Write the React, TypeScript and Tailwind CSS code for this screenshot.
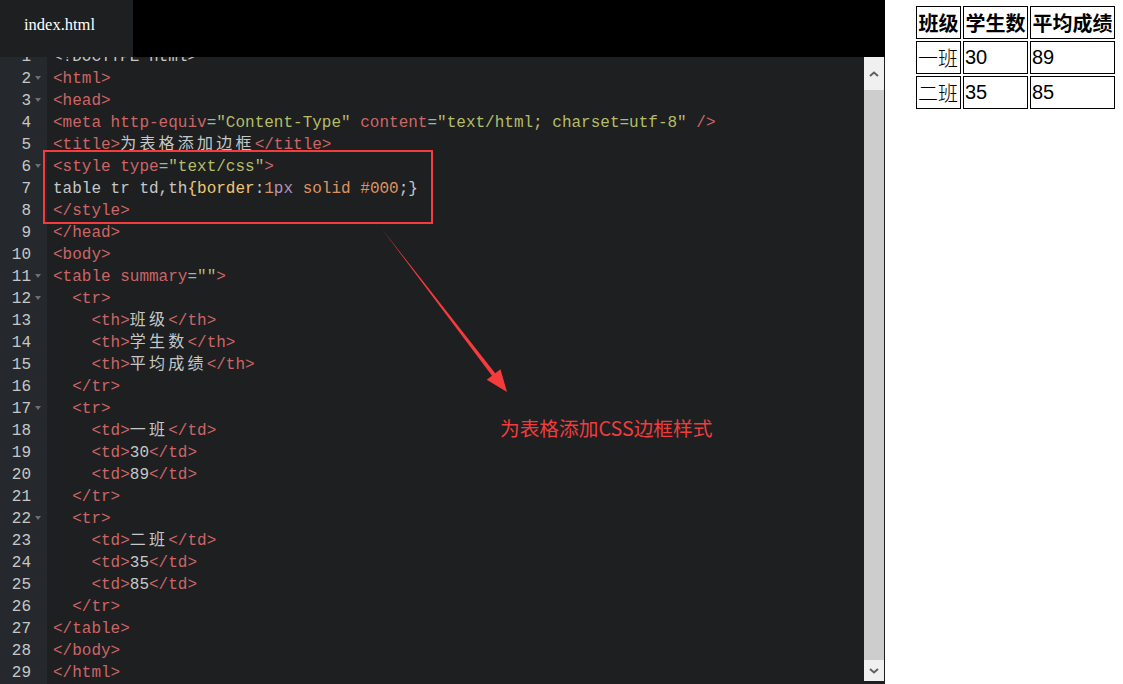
import React from "react";

const R = "#cc6666";
const W = "#c5c8c6";
const G = "#b5bd68";
const A = "#8abeb7";
const Y = "#f0c674";
const O = "#de935f";
const P = "#b294bb";

type Tok = [string, string, boolean?];

const lines: Tok[][] = [
  [["<!DOCTYPE html>", W]],
  [["<html>", R]],
  [["<head>", R]],
  [
    ["<meta http-equiv", R],
    ["=", A],
    ['"Content-Type"', G],
    [" content", R],
    ["=", A],
    ['"text/html; charset=utf-8"', G],
    [" />", R],
  ],
  [["<title>", R], ["为表格添加边框", W, true], ["</title>", R]],
  [["<style type", R], ["=", A], ['"text/css"', G], [">", R]],
  [
    ["table tr td,th", W],
    ["{", Y],
    ["border", Y],
    [":", W],
    ["1", O],
    ["px", P],
    [" solid #000", O],
    [";", W],
    ["}", W],
  ],
  [["</style>", R]],
  [["</head>", R]],
  [["<body>", R]],
  [["<table summary", R], ["=", A], ['""', G], [">", R]],
  [["  ", W], ["<tr>", R]],
  [["    ", W], ["<th>", R], ["班级", W, true], ["</th>", R]],
  [["    ", W], ["<th>", R], ["学生数", W, true], ["</th>", R]],
  [["    ", W], ["<th>", R], ["平均成绩", W, true], ["</th>", R]],
  [["  ", W], ["</tr>", R]],
  [["  ", W], ["<tr>", R]],
  [["    ", W], ["<td>", R], ["一班", W, true], ["</td>", R]],
  [["    ", W], ["<td>", R], ["30", W], ["</td>", R]],
  [["    ", W], ["<td>", R], ["89", W], ["</td>", R]],
  [["  ", W], ["</tr>", R]],
  [["  ", W], ["<tr>", R]],
  [["    ", W], ["<td>", R], ["二班", W, true], ["</td>", R]],
  [["    ", W], ["<td>", R], ["35", W], ["</td>", R]],
  [["    ", W], ["<td>", R], ["85", W], ["</td>", R]],
  [["  ", W], ["</tr>", R]],
  [["</table>", R]],
  [["</body>", R]],
  [["</html>", R]],
];

const folds = new Set([2, 3, 6, 11, 12, 17, 22]);

const mono = { fontFamily: '"Liberation Mono", "Noto Sans CJK SC", monospace' };

export default function App() {
  return (
    <div className="relative flex w-[1123px] h-[684px] overflow-hidden bg-white">
      {/* Editor */}
      <div className="w-[885px] h-full flex flex-col bg-[#1d1f21]">
        <div className="h-[57px] flex bg-black shrink-0 relative z-10">
          <div
            className="w-[133px] h-full bg-[#1d1f21] flex items-center pl-[24px] pb-[6px] text-white text-[16.5px]"
            style={{ fontFamily: '"Liberation Serif", serif' }}
          >
            index.html
          </div>
        </div>
        <div className="flex-1 flex overflow-hidden">
          {/* gutter */}
          <div className="w-[47px] bg-[#25282c] overflow-hidden">
            <div className="mt-[-11px] text-[16px] text-[#c5c8c6]" style={mono}>
              {lines.map((_, i) => (
                <div key={i} className="h-[22px] leading-[22px] flex items-center">
                  <span className="w-[31px] text-right">{i + 1}</span>
                  {folds.has(i + 1) && (
                    <span className="ml-[4px] mb-[2px] w-0 h-0 border-l-[3.5px] border-r-[3.5px] border-t-[4px] border-l-transparent border-r-transparent border-t-[#6d6f72]" />
                  )}
                </div>
              ))}
            </div>
          </div>
          {/* code */}
          <div className="flex-1 overflow-hidden pl-[6px]">
            <div className="mt-[-11px] text-[16px] whitespace-pre" style={mono}>
              {lines.map((toks, i) => (
                <div key={i} className="h-[22px] leading-[22px]">
                  {toks.map(([t, c, cjk], j) => (
                    <span
                      key={j}
                      className={cjk ? "tracking-[3.2px]" : ""}
                      style={{ color: c }}
                    >
                      {t}
                    </span>
                  ))}
                </div>
              ))}
            </div>
          </div>
          {/* scrollbar */}
          <div className="w-[20px] flex flex-col">
            <div className="h-[33px] bg-[#f0f0f0] flex items-center justify-center">
              <svg width="10" height="6" viewBox="0 0 10 6">
                <path d="M1 5 L5 1.5 L9 5" fill="none" stroke="#606060" strokeWidth="2" />
              </svg>
            </div>
            <div className="flex-1 bg-[#cdcdcd]" />
            <div className="h-[21px] bg-[#f0f0f0] flex items-center justify-center">
              <svg width="10" height="6" viewBox="0 0 10 6">
                <path d="M1 1 L5 4.5 L9 1" fill="none" stroke="#606060" strokeWidth="2" />
              </svg>
            </div>
            <div className="h-[3px] bg-[#1d1f21]" />
          </div>
          <div className="w-[1px] bg-[#1d1f21]" />
        </div>
      </div>

      {/* Preview */}
      <div className="flex-1 bg-white pt-[4px] pl-[29px]">
        <table className="border-separate border-spacing-[2px] text-black">
          <thead>
            <tr>
              {[
                ["班级", "w-[41px]"],
                ["学生数", "w-[61px]"],
                ["平均成绩", "w-[81px]"],
              ].map(([t, w]) => (
                <th
                  key={t}
                  className="border border-black p-[1px] font-bold text-[20px] leading-[29px]"
                  style={{ fontFamily: '"Noto Sans CJK SC", sans-serif' }}
                >
                  <div className={w + " h-[29px] text-center"}>{t}</div>
                </th>
              ))}
            </tr>
          </thead>
          <tbody>
            {[
              ["一班", "30", "89"],
              ["二班", "35", "85"],
            ].map((row) => (
              <tr key={row[0]}>
                {row.map((c, k) => (
                  <td
                    key={k}
                    className="border border-black p-[1px] text-[20px] leading-[29px]"
                    style={{
                      fontFamily:
                        k === 0
                          ? '"Noto Sans CJK SC", serif'
                          : '"Liberation Sans", "Noto Sans CJK SC", sans-serif',
                    }}
                  >
                    <div
                      className={
                        (k === 0 ? "w-[41px] font-light" : k === 1 ? "w-[61px]" : "w-[81px]") +
                        " h-[29px] text-left"
                      }
                    >
                      {c}
                    </div>
                  </td>
                ))}
              </tr>
            ))}
          </tbody>
        </table>
      </div>

      {/* Annotations */}
      <div className="absolute left-[43px] top-[150px] w-[390px] h-[74px] border-2 border-[#f53b3b] pointer-events-none" />
      <svg
        className="absolute left-0 top-0 pointer-events-none"
        width="1123"
        height="684"
        viewBox="0 0 1123 684"
      >
        <polygon
          points="382,229 495.2,373.3 500.5,369.2 507,392 486.7,379.8 492,375.7"
          fill="#f53b3b"
        />
      </svg>
      <div
        className="absolute left-[500px] top-[414px] text-[19.7px] leading-[28px] text-[#f03c3c]"
        style={{ fontFamily: '"Noto Sans CJK SC", sans-serif' }}
      >
        为表格添加CSS边框样式
      </div>
    </div>
  );
}
